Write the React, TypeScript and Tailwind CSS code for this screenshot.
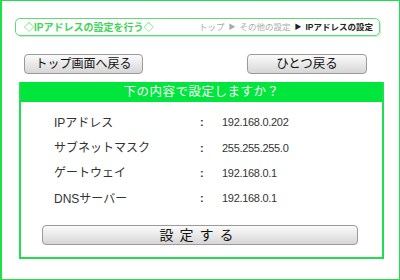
export default function App() {
    const rows = [
        { label: 'IPアドレス', value: '192.168.0.202' },
        { label: 'サブネットマスク', value: '255.255.255.0' },
        { label: 'ゲートウェイ', value: '192.168.0.1' },
        { label: 'DNSサーバー', value: '192.168.0.1' },
    ];

    const btn =
        'h-[20px] rounded-[4px] border border-[#9a9a9a] bg-gradient-to-b from-[#fbfbfb] via-[#e9e9e9] to-[#d6d6d6] text-[#111] flex items-center justify-center leading-none';

    return (
        <div
            className="w-[400px] h-[280px] bg-white border border-l-2 border-[#1fe04a] pt-[17px]"
            style={{ fontFamily: '"Liberation Sans", "Noto Sans CJK JP", sans-serif' }}
        >
            {/* title + breadcrumb */}
            <div className="ml-[13px] w-[365px] h-[18px] rounded-[5px] border border-[#5fdc74] shadow-[1px_1px_0_#c8f0cf] flex items-center justify-between pl-[8px] pr-[6px]">
                <span className="text-[10px] font-semibold text-[#3fd45a]">◇IPアドレスの設定を行う◇</span>
                <span className="text-[8.5px] text-[#aaa] flex items-center gap-[4px]">
                    <span>トップ</span>
                    <span className="text-[7px]">▶</span>
                    <span>その他の設定</span>
                    <span className="text-[7px] text-[#222]">▶</span>
                    <span className="font-bold text-[#222]">IPアドレスの設定</span>
                </span>
            </div>

            {/* nav buttons */}
            <div className="mt-[18px] flex justify-between pl-[22px] pr-[32px]">
                <button className={`${btn} w-[119px] text-[12px]`}>トップ画面へ戻る</button>
                <button className={`${btn} w-[120px] text-[12.5px]`}>ひとつ戻る</button>
            </div>

            {/* confirm box */}
            <div className="mt-[8px] ml-[17px] w-[365px] h-[177px] border-2 border-t-0 border-[#22dd50] flex flex-col">
                <div className="h-[20px] bg-[#00e63c] text-white text-[12.5px] flex items-center justify-center tracking-[0.5px]">
                    下の内容で設定しますか？
                </div>
                <div className="mt-[8px] flex flex-col">
                    {rows.map((r) => (
                        <div key={r.label} className="h-[25.3px] flex items-center text-[#333]">
                            <span className="ml-[33px] w-[146px] text-[12px]">{r.label}</span>
                            <span className="w-[22px] text-[11px] font-bold">:</span>
                            <span className="text-[11px] tracking-[-0.3px]">{r.value}</span>
                        </div>
                    ))}
                </div>
                <div className="mt-[14px] flex justify-center pr-[4px]">
                    <button className={`${btn} w-[316px] text-[14px] tracking-[6px]`}>設定する</button>
                </div>
            </div>
        </div>
    );
}
